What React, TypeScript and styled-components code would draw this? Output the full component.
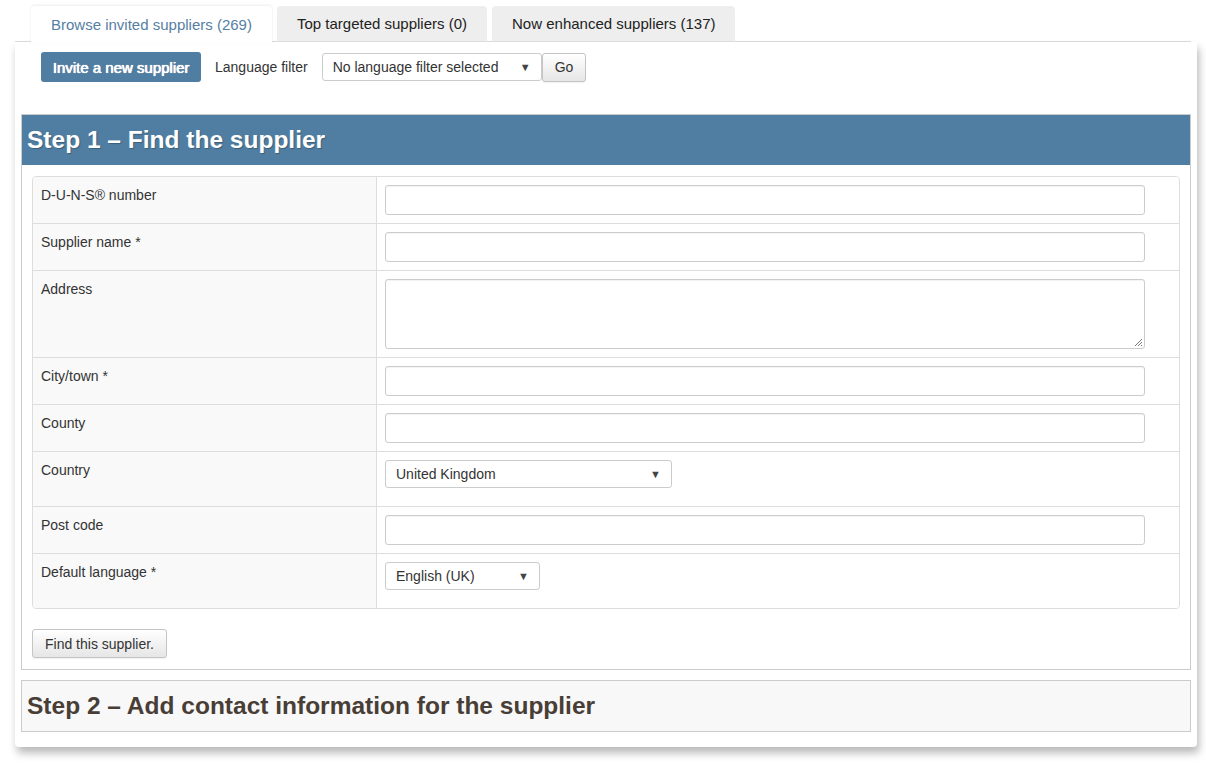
import styled, { createGlobalStyle } from 'styled-components';

const GlobalStyle = createGlobalStyle`
  html, body {
    margin: 0;
    padding: 0;
    background: #fff;
    font-family: "Liberation Sans", Arial, sans-serif;
    color: #333;
  }
  * { box-sizing: border-box; }
`;

const Page = styled.div`
  width: 1206px;
  height: 763px;
  padding: 6px 9px 0 15px;
`;

const TabBar = styled.div`
  display: flex;
  gap: 5px;
  padding-left: 16px;
  height: 36px;
  border-bottom: 1px solid #ddd;
  margin-right: 6px;
`;

const Tab = styled.div<{ $active?: boolean }>`
  padding: 0 20px 1px;
  display: flex;
  align-items: center;
  font-size: 15px;
  border-radius: 4px 4px 0 0;
  background: ${(p) => (p.$active ? '#fff' : '#eee')};
  color: ${(p) => (p.$active ? '#5580a3' : '#222')};
  box-shadow: ${(p) =>
    p.$active ? '0 -1px 3px rgba(0,0,0,0.08)' : 'inset 0 -1px 0 #ddd'};
  position: relative;
  z-index: ${(p) => (p.$active ? 2 : 1)};
  margin-bottom: ${(p) => (p.$active ? '-1px' : '0')};
  height: ${(p) => (p.$active ? '37px' : '36px')};
`;

const Card = styled.div`
  width: 1182px;
  height: 705px;
  background: #fff;
  border-radius: 0 0 4px 4px;
  box-shadow: 2px 6px 8px rgba(0, 0, 0, 0.28);
  padding: 10px 6px 0 6px;
`;

const Toolbar = styled.div`
  display: flex;
  align-items: center;
  padding-left: 20px;
  height: 30px;
  margin-bottom: 32px;
`;

const PrimaryButton = styled.button`
  height: 30px;
  width: 160px;
  padding: 0;
  border: none;
  border-radius: 3px;
  background: #4f7ea2;
  color: #fff;
  font-family: "Liberation Sans", Arial, sans-serif;
  font-size: 15px;
  font-weight: normal;
  text-shadow: 0 0 1px #fff, 0.4px 0 0 #fff;
`;

const FilterLabel = styled.span`
  font-size: 14px;
  margin: 0 14px 0 14px;
  color: #333;
`;

const SelectBox = styled.div<{ $w: number; $h?: number }>`
  width: ${(p) => p.$w}px;
  height: ${(p) => p.$h ?? 28}px;
  border: 1px solid #ccc;
  border-radius: 3px;
  background: #fff;
  display: flex;
  align-items: center;
  justify-content: space-between;
  padding: 0 10px;
  font-size: 14px;
  color: #333;
  &::after {
    content: '▼';
    font-size: 11px;
    color: #444;
  }
`;

const GreyButton = styled.button`
  height: 29px;
  padding: 0 12px;
  border: 1px solid #c4c4c4;
  border-radius: 3px;
  background: linear-gradient(#fff, #e6e6e6);
  color: #333;
  font-family: "Liberation Sans", Arial, sans-serif;
  font-size: 14px;
  box-shadow: 0 1px 1px rgba(0,0,0,0.06);
`;

const Panel = styled.div`
  border: 1px solid #ccc;
  height: 556px;
  display: flex;
  flex-direction: column;
`;

const PanelHeader = styled.h2`
  margin: 0;
  height: 50px;
  background: #4f7ea2;
  color: #fff;
  font-size: 24.5px;
  font-weight: bold;
  display: flex;
  align-items: center;
  padding-left: 5px;
  text-shadow: 1px 1px 1px rgba(0,0,0,0.25);
`;

const PanelBody = styled.div`
  padding: 11px 10px 10px 10px;
`;

const FormTable = styled.div`
  border: 1px solid #ddd;
  border-radius: 4px;
  overflow: hidden;
  margin-bottom: 20px;
`;

const Row = styled.div<{ $h: number }>`
  display: grid;
  grid-template-columns: 344px 1fr;
  height: ${(p) => p.$h}px;
  border-top: 1px solid #ddd;
  &:first-child { border-top: none; }
`;

const LabelCell = styled.div`
  background: #f9f9f9;
  border-right: 1px solid #ddd;
  padding: 10px 8px;
  font-size: 14px;
  color: #333;
`;

const FieldCell = styled.div`
  padding: 8px 8px;
  background: #fff;
`;

const TextInput = styled.div<{ $h?: number }>`
  width: 760px;
  height: ${(p) => p.$h ?? 30}px;
  border: 1px solid #ccc;
  border-radius: 3px;
  background: #fff;
  box-shadow: inset 0 1px 1px rgba(0,0,0,0.05);
  position: relative;
`;

const ResizeGrip = styled.svg`
  position: absolute;
  right: 1px;
  bottom: 1px;
`;

const Step2 = styled.div`
  margin-top: 10px;
  height: 52px;
  border: 1px solid #ccc;
  background: #f8f8f8;
  display: flex;
  align-items: center;
  padding-left: 5px;
  font-size: 24.5px;
  font-weight: bold;
  color: #483e36;
`;

const rows: { label: string; h: number; kind: 'input' | 'area' | 'select'; value?: string; w?: number }[] = [
  { label: 'D-U-N-S® number', h: 46, kind: 'input' },
  { label: 'Supplier name *', h: 47, kind: 'input' },
  { label: 'Address', h: 87, kind: 'area' },
  { label: 'City/town *', h: 47, kind: 'input' },
  { label: 'County', h: 47, kind: 'input' },
  { label: 'Country', h: 55, kind: 'select', value: 'United Kingdom', w: 287 },
  { label: 'Post code', h: 47, kind: 'input' },
  { label: 'Default language *', h: 55, kind: 'select', value: 'English (UK)', w: 155 },
];

export default function App() {
  return (
    <>
      <GlobalStyle />
      <Page>
        <TabBar>
          <Tab $active>Browse invited suppliers (269)</Tab>
          <Tab>Top targeted suppliers (0)</Tab>
          <Tab>Now enhanced suppliers (137)</Tab>
        </TabBar>
        <Card>
          <Toolbar>
            <PrimaryButton>Invite a new supplier</PrimaryButton>
            <FilterLabel>Language filter</FilterLabel>
            <SelectBox $w={220} $h={28}>No language filter selected</SelectBox>
            <GreyButton>Go</GreyButton>
          </Toolbar>
          <Panel>
            <PanelHeader>Step 1 – Find the supplier</PanelHeader>
            <PanelBody>
              <FormTable>
                {rows.map((r) => (
                  <Row key={r.label} $h={r.h}>
                    <LabelCell>{r.label}</LabelCell>
                    <FieldCell>
                      {r.kind === 'input' && <TextInput />}
                      {r.kind === 'area' && (
                        <TextInput $h={70}>
                          <ResizeGrip width="10" height="10" viewBox="0 0 10 10">
                            <path d="M9 2L2 9M9 5L5 9M9 8L8 9" stroke="#777" strokeWidth="1" />
                          </ResizeGrip>
                        </TextInput>
                      )}
                      {r.kind === 'select' && (
                        <SelectBox $w={r.w ?? 200}>{r.value}</SelectBox>
                      )}
                    </FieldCell>
                  </Row>
                ))}
              </FormTable>
              <GreyButton>Find this supplier.</GreyButton>
            </PanelBody>
          </Panel>
          <Step2>Step 2 – Add contact information for the supplier</Step2>
        </Card>
      </Page>
    </>
  );
}
